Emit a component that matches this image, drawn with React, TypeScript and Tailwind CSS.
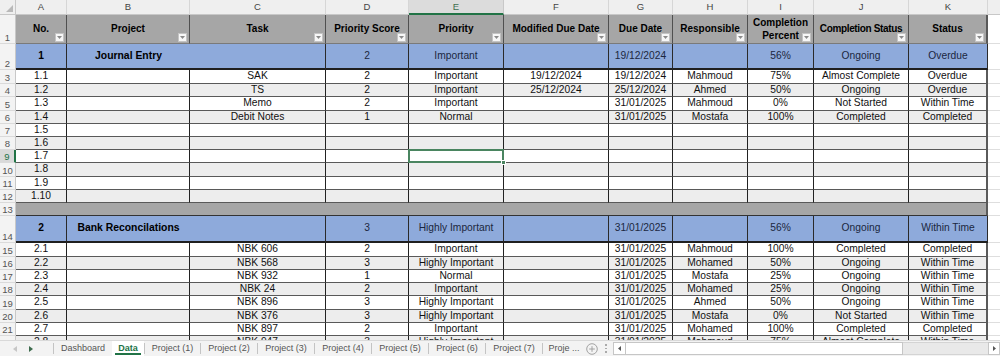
import React from "react";

const GRID =
  "grid shrink-0 grid-cols-[16px_51px_123px_136px_83px_95px_105px_64px_75px_66px_95px_79px_12px]";

const letters = ["A", "B", "C", "D", "E", "F", "G", "H", "I", "J", "K"];
const headers = [
  "No.",
  "Project",
  "Task",
  "Priority Score",
  "Priority",
  "Modified Due Date",
  "Due Date",
  "Responsible",
  "Completion Percent",
  "Completion Status",
  "Status",
];

type DataRow = { n: number; h: string; grey: boolean; cells: string[] };

const e = (a: string) => [a, "", "", "", "", "", "", "", "", "", ""];

const block1: DataRow[] = [
  { n: 3, h: "h-[14px]", grey: false, cells: ["1.1", "", "SAK", "2", "Important", "19/12/2024", "19/12/2024", "Mahmoud", "75%", "Almost Complete", "Overdue"] },
  { n: 4, h: "h-[13px]", grey: true, cells: ["1.2", "", "TS", "2", "Important", "25/12/2024", "25/12/2024", "Ahmed", "50%", "Ongoing", "Overdue"] },
  { n: 5, h: "h-[14px]", grey: false, cells: ["1.3", "", "Memo", "2", "Important", "", "31/01/2025", "Mahmoud", "0%", "Not Started", "Within Time"] },
  { n: 6, h: "h-[13px]", grey: true, cells: ["1.4", "", "Debit Notes", "1", "Normal", "", "31/01/2025", "Mostafa", "100%", "Completed", "Completed"] },
  { n: 7, h: "h-[13px]", grey: false, cells: e("1.5") },
  { n: 8, h: "h-[13px]", grey: true, cells: e("1.6") },
  { n: 9, h: "h-[13px]", grey: false, cells: e("1.7") },
  { n: 10, h: "h-[14px]", grey: true, cells: e("1.8") },
  { n: 11, h: "h-[13px]", grey: false, cells: e("1.9") },
  { n: 12, h: "h-[13px]", grey: true, cells: e("1.10") },
];

const block2: DataRow[] = [
  { n: 15, h: "h-[14px]", grey: false, cells: ["2.1", "", "NBK 606", "2", "Important", "", "31/01/2025", "Mahmoud", "100%", "Completed", "Completed"] },
  { n: 16, h: "h-[13px]", grey: true, cells: ["2.2", "", "NBK 568", "3", "Highly Important", "", "31/01/2025", "Mohamed", "50%", "Ongoing", "Within Time"] },
  { n: 17, h: "h-[13px]", grey: false, cells: ["2.3", "", "NBK 932", "1", "Normal", "", "31/01/2025", "Mostafa", "25%", "Ongoing", "Within Time"] },
  { n: 18, h: "h-[13px]", grey: true, cells: ["2.4", "", "NBK 24", "2", "Important", "", "31/01/2025", "Mohamed", "25%", "Ongoing", "Within Time"] },
  { n: 19, h: "h-[14px]", grey: false, cells: ["2.5", "", "NBK 896", "3", "Highly Important", "", "31/01/2025", "Ahmed", "50%", "Ongoing", "Within Time"] },
  { n: 20, h: "h-[13px]", grey: true, cells: ["2.6", "", "NBK 376", "3", "Highly Important", "", "31/01/2025", "Mostafa", "0%", "Not Started", "Within Time"] },
  { n: 21, h: "h-[13px]", grey: false, cells: ["2.7", "", "NBK 897", "2", "Important", "", "31/01/2025", "Mohamed", "100%", "Completed", "Completed"] },
  { n: 22, h: "h-[13px]", grey: true, cells: ["2.8", "", "NBK 947", "3", "Highly Important", "", "31/01/2025", "Mahmoud", "75%", "Almost Complete", "Within Time"] },
];

function RowNum({ n, selected }: { n: number; selected?: boolean }) {
  return (
    <div
      className={`flex items-end justify-center pb-[1px] text-[9.5px] leading-none border-b border-b-[#dadada] ${
        selected
          ? "bg-[#d9d9d9] text-[#217346] border-r-2 border-r-[#217346]"
          : "bg-[#f3f3f3] text-[#555] border-r border-r-[#c8c8c8]"
      }`}
    >
      {n}
    </div>
  );
}

function FilterBtn() {
  return (
    <span className="absolute right-[2px] bottom-[1px] w-[9px] h-[9px] bg-[#f7f7f7] border border-[#c4c4c4] flex items-center justify-center z-10">
      <svg width="5" height="3" viewBox="0 0 5 3">
        <path d="M0 0h5L2.5 3z" fill="#8a8a8a" />
      </svg>
    </span>
  );
}

function LetterRow() {
  return (
    <div className={`${GRID} h-[15px]`}>
      <div className="relative bg-[#efefef] border-r border-r-[#c8c8c8] border-b border-b-[#c8c8c8]">
        <svg className="absolute right-[2px] bottom-[2px]" width="7" height="7" viewBox="0 0 7 7">
          <path d="M7 0V7H0z" fill="#b9b9b9" />
        </svg>
      </div>
      {letters.map((l) => (
        <div
          key={l}
          className={`flex items-center justify-center text-[9.5px] leading-none ${
            l === "E"
              ? "bg-[#dcdcdc] text-[#3f6f50] border-b-2 border-b-[#217346] border-r border-r-[#c8c8c8]"
              : "bg-[#efefef] text-[#444] border-b border-b-[#c8c8c8] border-r border-r-[#d6d6d6]"
          }`}
        >
          {l}
        </div>
      ))}
      <div className="bg-[#efefef] border-b border-b-[#c8c8c8]" />
    </div>
  );
}

function HeaderRow() {
  return (
    <div className={`${GRID} h-[29px]`}>
      <RowNum n={1} />
      {headers.map((h, i) => (
        <div
          key={h}
          className={`relative flex items-center justify-center overflow-hidden bg-[#a6a6a6] text-black font-bold text-[10px] border-b border-b-[#7a7a7a] ${
            i === 10 ? "border-r-2 border-r-[#5a5a5a]" : "border-r border-r-[#505050]"
          }`}
        >
          {i === 8 ? (
            <span className="block w-full text-center leading-[13px] whitespace-normal px-[2px]">{h}</span>
          ) : i === 9 ? (
            <span className="shrink-0 whitespace-nowrap leading-none tracking-[-0.35px]">{h}</span>
          ) : (
            <span className="shrink-0 whitespace-nowrap leading-none">{h}</span>
          )}
          <FilterBtn />
        </div>
      ))}
      <div className="bg-white border-b border-b-[#dedede]" />
    </div>
  );
}

function BlueRow({ n, h, cells }: { n: number; h: string; cells: string[] }) {
  const base =
    "flex items-center justify-center whitespace-nowrap overflow-hidden bg-[#8eaadb] border-b-2 border-b-[#1f1f1f] text-[10.25px] leading-none text-[#1b2740]";
  return (
    <div className={`${GRID} ${h}`}>
      <RowNum n={n} />
      <div className={`${base} border-r border-r-[#2a2a2a] font-bold text-black text-[10.4px]`}>{cells[0]}</div>
      <div className={`${base} col-span-2 border-r border-r-[#2a2a2a]`}>
        <span className="w-[123px] text-center font-bold text-black text-[10.4px]">{cells[1]}</span>
        <span className="flex-1" />
      </div>
      {cells.slice(2).map((c, i) => (
        <div
          key={i}
          className={`${base} ${i === 8 ? "border-r-2 border-r-[#5a5a5a]" : "border-r border-r-[#2a2a2a]"}`}
        >
          {c}
        </div>
      ))}
      <div className="bg-white border-b border-b-[#dedede]" />
    </div>
  );
}

function Data({ row, selCol }: { row: DataRow; selCol?: number }) {
  return (
    <div className={`${GRID} ${row.h}`}>
      <RowNum n={row.n} selected={selCol !== undefined} />
      {row.cells.map((c, i) => (
        <div
          key={i}
          className={`relative flex items-center justify-center whitespace-nowrap text-[10.25px] leading-none text-[#111] border-b border-b-[#595959] ${
            row.grey ? "bg-[#ededed]" : "bg-white"
          } ${i === 10 ? "border-r-2 border-r-[#5a5a5a]" : "border-r border-r-[#222]"}`}
        >
          {c}
          {selCol === i && (
            <>
              <span className="absolute left-[-1px] top-[-1px] right-[-1px] bottom-[-1px] border-2 border-[#4a8560] z-10" />
              <span className="absolute right-[-3px] bottom-[-3px] w-[5px] h-[5px] bg-[#4a8560] border border-white z-20" />
            </>
          )}
        </div>
      ))}
      <div className="bg-white border-b border-b-[#dedede]" />
    </div>
  );
}

function Separator() {
  return (
    <div className={`${GRID} h-[13px]`}>
      <RowNum n={13} />
      <div className="col-span-11 bg-[#a6a6a6] border-b border-b-[#333] border-r-2 border-r-[#5a5a5a]" />
      <div className="bg-white border-b border-b-[#dedede]" />
    </div>
  );
}

function Tab({ label, w }: { label: string; w: string }) {
  return (
    <>
      <div className={`${w} flex items-center justify-center text-[9px] text-[#555] whitespace-nowrap`}>{label}</div>
      <div className="w-px h-[11px] bg-[#c4c4c4] self-center" />
    </>
  );
}

function TabBar() {
  return (
    <div className="h-[16px] shrink-0 flex items-stretch bg-[#f3f3f3] border-t border-t-[#d9d9d9]">
      <div className="w-[53px] flex items-center">
        <svg className="ml-[13px]" width="4" height="6" viewBox="0 0 4 6">
          <path d="M4 0v6L0 3z" fill="#c6c6c6" />
        </svg>
        <svg className="ml-[12px]" width="4" height="6" viewBox="0 0 4 6">
          <path d="M0 0v6l4-3z" fill="#3d6b4d" />
        </svg>
      </div>
      <div className="w-px h-[11px] bg-[#c4c4c4] self-center" />
      <div className="w-[58px] flex items-center justify-center text-[9px] text-[#555]">Dashboard</div>
      <div className="w-[32px] relative flex items-center justify-center bg-white text-[9px] font-bold text-[#217346]">
        Data
        <span className="absolute left-[3px] right-[3px] bottom-[1px] h-[2px] bg-[#217346]" />
      </div>
      <div className="w-px h-[11px] bg-[#c4c4c4] self-center" />
      <Tab label="Project (1)" w="w-[55px]" />
      <Tab label="Project (2)" w="w-[56px]" />
      <Tab label="Project (3)" w="w-[56px]" />
      <Tab label="Project (4)" w="w-[56px]" />
      <Tab label="Project (5)" w="w-[56px]" />
      <Tab label="Project (6)" w="w-[56px]" />
      <Tab label="Project (7)" w="w-[56px]" />
      <div className="w-[42px] flex items-center justify-center text-[9px] text-[#555] whitespace-nowrap">Proje ...</div>
      <div className="w-[14px] flex items-center justify-center">
        <svg width="12" height="12" viewBox="0 0 12 12">
          <circle cx="6" cy="6" r="5.3" fill="none" stroke="#9a9a9a" strokeWidth="0.9" />
          <path d="M6 3.2v5.6M3.2 6h5.6" stroke="#9a9a9a" strokeWidth="0.9" />
        </svg>
      </div>
      <div className="w-[14px] flex flex-col items-center justify-center gap-[2px]">
        <span className="w-[1.5px] h-[1.5px] bg-[#aaa]" />
        <span className="w-[1.5px] h-[1.5px] bg-[#aaa]" />
        <span className="w-[1.5px] h-[1.5px] bg-[#aaa]" />
      </div>
      <div className="flex-1 flex items-center">
        <div className="h-[13px] w-[13px] bg-white border border-[#c6c6c6] flex items-center justify-center">
          <svg width="3" height="5" viewBox="0 0 3 5">
            <path d="M3 0v5L0 2.5z" fill="#555" />
          </svg>
        </div>
        <div className="h-[13px] w-[277px] bg-white border border-l-0 border-[#c6c6c6]" />
        <div className="h-[13px] flex-1 bg-[#e9e9e9] border-y border-[#d4d4d4]" />
        <div className="h-[13px] w-[12px] bg-white border border-[#c6c6c6] flex items-center justify-center">
          <svg width="3" height="5" viewBox="0 0 3 5">
            <path d="M0 0v5l3-2.5z" fill="#555" />
          </svg>
        </div>
      </div>
    </div>
  );
}

export default function App() {
  return (
    <div className="w-[1000px] h-[356px] overflow-hidden bg-white flex flex-col font-['Liberation_Sans',Arial,sans-serif]">
      <div className="h-[340px] overflow-hidden flex flex-col shrink-0">
        <LetterRow />
        <HeaderRow />
        <BlueRow
          n={2}
          h="h-[26px]"
          cells={["1", "Journal Entry", "2", "Important", "", "19/12/2024", "", "56%", "Ongoing", "Overdue"]}
        />
        {block1.map((r) => (
          <Data key={r.n} row={r} selCol={r.n === 9 ? 4 : undefined} />
        ))}
        <Separator />
        <BlueRow
          n={14}
          h="h-[27px]"
          cells={["2", "Bank Reconcilations", "3", "Highly Important", "", "31/01/2025", "", "56%", "Ongoing", "Within Time"]}
        />
        {block2.map((r) => (
          <Data key={r.n} row={r} />
        ))}
      </div>
      <TabBar />
    </div>
  );
}
